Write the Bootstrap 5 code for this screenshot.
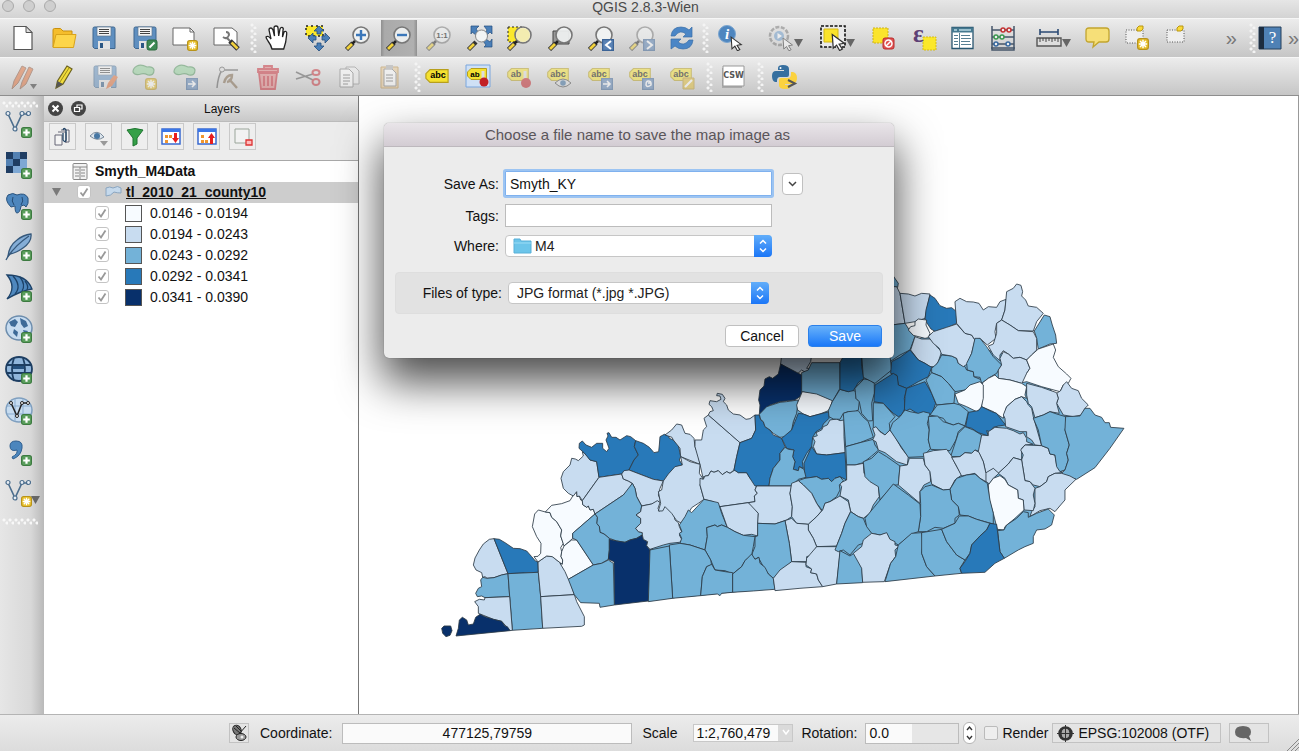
<!DOCTYPE html>
<html lang="en">
<head>
<meta charset="utf-8">
<meta name="viewport" content="width=device-width, initial-scale=1">
<title>QGIS 2.8.3-Wien</title>
<link href="https://cdn.jsdelivr.net/npm/bootstrap@5.3.0/dist/css/bootstrap.min.css" rel="stylesheet">
<style>
body{font-family:"Liberation Sans",Arial,sans-serif;font-size:13px;line-height:18px;color:#111;background:#ececec;overflow:hidden}
.titlebar{height:18px;flex:none;background:linear-gradient(#e6e6e6,#d3d3d3);color:#4a4a4a;font-size:14px;line-height:14px;padding-right:8px}
.lights{left:2px;top:0}
.lights i{width:12px;height:12px;border-radius:50%;background:#cfcfcf;border:1px solid #aaa}
.toolrow{height:39px;flex:none;background:linear-gradient(#ececec,#c6c6c6);border-top:1px solid #f6f6f6;padding-left:7px}
.toolrow.last-row{border-bottom:1px solid #8e8e8e}
.tb{width:32px;height:36px;flex:none;padding:0;border:0;background:none;display:flex;align-items:center;justify-content:center}
.tb svg{width:26px;height:26px;flex:none;overflow:visible}
.tb.pressed{background:linear-gradient(90deg,#8f8f8f,#aaa 10%,#b0b0b0 90%,#8f8f8f);width:36px;margin:0 -2px}
.off svg{opacity:.5}
.off svg.caret{opacity:1}
.grp-a{width:235px}.grp-b{width:437px}.grp-c{width:399px}.grp-d{width:277px}
.grip{width:7px;height:30px;flex:none;background:radial-gradient(circle at 2px 2px,#f4f4f4 1px,transparent 2px) 0 0/7px 6px,radial-gradient(circle at 5px 5px,#f4f4f4 1px,transparent 2px) 0 0/7px 6px}
.grip-h{width:36px;height:7px;flex:none;background:radial-gradient(circle at 2px 2px,#f8f8f8 1px,transparent 2px) 0 0/6px 7px,radial-gradient(circle at 5px 5px,#f8f8f8 1px,transparent 2px) 0 0/6px 7px}
.arrow-btn{width:48px}
.arrow-btn .caret{width:9px;height:8px;margin-top:10px}
.more{color:#777;font-size:20px;line-height:20px;border:0;background:none;padding:0}
.side{width:44px;flex:none;background:linear-gradient(90deg,#e6e6e6,#d8d8d8 70%,#b9b9b9);padding-top:5px}
.side .tb{width:44px;height:41px;padding:2px 7px 0 0;align-items:flex-start}
.side .tb svg{width:28px;height:28px}
.side .tb .caret{width:9px;height:8px;margin:17px -7px 0 -2px}
.panel{width:315px;flex:none;background:#ececec;border-right:1px solid #777}
.panel-head{height:26px;background:linear-gradient(#e9e9e9,#c9c9c9);border-bottom:1px solid #bbb;font-size:12px}
.panel-head .round{width:15px;height:15px;padding:0;border:0;background:none;display:flex}
.panel-tools{gap:9px;padding:1px 5px 10px;border-bottom:1px solid #a8a8a8}
.panel-tools button{width:27px;height:27px;padding:0;border:1px solid #c9c9c9;background:#eee;display:flex;align-items:center;justify-content:center}
.panel-tools svg{width:20px;height:20px}
.tree{background:#fff;font-size:14px}
.tree .trow{height:21px;display:flex;align-items:center;padding-bottom:1px}
.tree .sel{background:#cdcdcd}
.tree .cls{padding-left:51px}
.tree input{appearance:none;width:14px;height:14px;margin:0;border:1px solid #c4c4c4;border-radius:3px;background:#fff url("data:image/svg+xml,%3Csvg xmlns='http://www.w3.org/2000/svg' viewBox='0 0 12 12'%3E%3Cpath d='M2.500 6.500l2.500 3 4.500-7' fill='none' stroke='%23999' stroke-width='1.800'/%3E%3C/svg%3E") center/12px}
.swatch{width:17px;height:17px;border:1px solid #555}
.lv1{background:#f7fbff}.lv2{background:#c8dcf0}.lv3{background:#73b2d8}.lv4{background:#2879b9}.lv5{background:#08306b}
.canvas{background:#fff;border-right:1px solid #999;min-width:0}
.canvas svg{display:block;width:100%;height:100%}
.county path{stroke:#2c3a46;stroke-opacity:.85;stroke-width:3;stroke-linejoin:round}
.f1{fill:#f7fbff}.f2{fill:#c8dcf0}.f3{fill:#73b2d8}.f4{fill:#2879b9}.f5{fill:#08306b}
.savebox{left:384px;top:27px;width:510px;background:#ececec;border-radius:5px;box-shadow:0 0 1px rgba(0,0,0,.5),0 22px 44px 2px rgba(0,0,0,.7);font-size:14px;padding-bottom:11px;z-index:5}
.savebox header{height:24px;line-height:24px;background:linear-gradient(#e9e5e9,#d3ccd3);border-bottom:1px solid #bdb8bd;border-radius:5px 5px 0 0;color:#5a555a;text-align:center;font-size:15px;padding-right:3px}
.savebox label{width:115px;text-align:right;flex:none}
.fields{padding-top:24px}
.frow{display:flex;align-items:center;gap:6px}
.tx{width:267px;height:23px;border:1px solid #bcbcbc;border-radius:0;padding:0 4px;background:#fff;font-size:14px;line-height:20px;color:#111}
.tx.active-in{height:25px;border:1px solid #7fb1ee;box-shadow:0 0 0 2px #9cc4f2;border-radius:1px;outline:0}
.dd{width:267px}
.dd select{appearance:none;width:100%;height:22px;border:1px solid #c6c6c6;border-radius:4px;background:#fff;padding:0 30px 0 8px;font-size:14px;line-height:18px;color:#222}
.dd .steps{right:0;top:0;width:18px;height:22px;border-radius:0 4px 4px 0;background:linear-gradient(#62aefa,#1b76f7);pointer-events:none}
.dd .fold{left:8px;top:3px;width:19px;height:16px;pointer-events:none}
.dd select.with-icon{padding-left:29px}
.dd.narrow{width:261px}
.more-btn{width:21px;height:22px;margin-left:4px;border:1px solid #c0c0c0;border-radius:4px;background:#fff;padding:0;display:flex;align-items:center;justify-content:center}
.typebox{margin:15px 11px 0;background:#e2e2e2;border-radius:4px;height:42px;border:1px solid #dedede}
.typebox label{width:106px}
.mac-row{gap:9px;padding:11px 12px 0 0}
.mac{height:22px;border-radius:4px;border:1px solid #c0c0c0;background:#fff;font-size:14px;line-height:20px;padding:0;width:74px;color:#111}
.mac.go{border-color:#2b80ea;background:linear-gradient(#68b2fa,#1a78f8);color:#fff}
.status{height:37px;flex:none;border-top:1px solid #b4b4b4;background:linear-gradient(#ececec,#dcdcdc);font-size:14px;padding-left:229px}
.status input[type=text]{height:21px;border:1px solid #bcbcbc;background:#fafafa;padding:0 3px;font-size:14px;line-height:18px;color:#111;border-radius:0}
.status .coord{width:290px;text-align:center;margin:0 10px}
.status .rot{width:94px;background:linear-gradient(90deg,#fafafa 50%,#e6e6e6 50%)!important}
.status .lbl-coord{margin-left:11px}
.status .sunk{height:20px;border:1px solid #c2c2c2;background:#e4e4e4;padding:0 4px;display:flex;align-items:center;color:#111;font-size:14px;line-height:16px}
.status .epsg{width:169px}
.status .msgs{width:40px}
.scalebox{width:100px}
.scalebox select{appearance:none;width:100%;height:18px;border:1px solid #c8c8c8;background:linear-gradient(90deg,#fafafa 86%,#dadada 86%);padding:0 2px;font-size:14px;line-height:16px;color:#111}
.scalebox svg{right:3px;top:5px;pointer-events:none}
.spin{width:13px;height:22px;border:1px solid #b5b5b5;border-radius:6px;background:#fff;padding:0;display:flex}
.status input[type=checkbox]{appearance:none;width:14px;height:14px;border:1px solid #bbb;background:#eee;border-radius:2px;margin:0}
</style>
</head>
<body class="d-flex flex-column vh-100">
<svg width="0" height="0" class="position-absolute" aria-hidden="true">
 <defs>
  <symbol id="caret" viewBox="0 0 9 8"><path d="M0 0h9L4.500 8z" fill="#666"/></symbol>
  <symbol id="plus" viewBox="0 0 10 10"><rect x=".5" y=".5" width="9" height="9" rx="2" fill="#5a9e5c" stroke="#3c7a40"/><path d="M5 2v6M2 5h6" stroke="#fff" stroke-width="2"/></symbol>
  <symbol id="star" viewBox="0 0 10 10"><rect x=".5" y=".5" width="9" height="9" rx="2" fill="#e8c02c" stroke="#b8931a"/><path d="M5 1.500v7M1.500 5h7M2.500 2.500l5 5M7.500 2.500l-5 5" stroke="#fff" stroke-width="1.200"/></symbol>
  <symbol id="blue" viewBox="0 0 10 10"><rect x=".5" y=".5" width="9" height="9" fill="#5b83b5" stroke="#3b6396"/></symbol>
  <symbol id="lens" viewBox="0 0 26 26"><path d="M1.500 24.500l6.500-6.500" stroke="#333" stroke-width="4.500"/><path d="M2 24l5-5" stroke="#f2d23c" stroke-width="2.800"/><path d="M7.500 18.500l3-3" stroke="#222" stroke-width="2.500"/><circle cx="16" cy="10" r="8" fill="#f2f4f4" fill-opacity=".9" stroke="#777" stroke-width="1.600"/></symbol>
  <symbol id="floppy" viewBox="0 0 26 26"><path d="M2 3.500q0-1.500 1.500-1.500h19q1.500 0 1.500 1.500v20H3.500L2 22z" fill="#5f8fc0" stroke="#3f678f"/><path d="M6 2h14v9H6z" fill="#f4f4f4" stroke="#5c7690" stroke-width=".7"/><path d="M8 4.500h10M8 6.500h10M8 8.500h10" stroke="#444"/><path d="M7 16h12v8H7z" fill="#e3e3e3"/><path d="M9 18h3v5H9z" fill="#2c5784"/></symbol>
  <symbol id="tag" viewBox="0 0 20 12"><path d="M4 .5h15.500v11H4L.5 8V4z" fill="#f5e130" stroke="#b79f1d"/></symbol>
  <symbol id="cursor" viewBox="0 0 12 14"><path d="M1 1l9.500 7-4 .7 2.600 4-2.200 1.100L4.500 9.500 1.800 12z" fill="#fff" stroke="#333"/></symbol>
  <symbol id="poly" viewBox="0 0 26 12"><path d="M5 2Q9 0 15 3q6-1 7 3 0 6-6 5-4-2-7-1-6 2-8-2Q1 4 5 2z" fill="#8fcf98" stroke="#4b9057" stroke-width="1.200"/></symbol>
  <symbol id="vee" viewBox="0 0 26 24"><path d="M3 4l7 15L17 4h6" fill="none" stroke="#4b6d8d" stroke-width="1.600"/><g fill="#e8eef4" stroke="#4b6d8d" stroke-width="1.200"><circle cx="3" cy="3.500" r="2"/><circle cx="17" cy="3.500" r="2"/><circle cx="23.500" cy="3.500" r="2"/><circle cx="10" cy="19" r="2"/></g></symbol>
 </defs>
</svg>

<header class="titlebar position-relative text-center">QGIS 2.8.3-Wien
 <span class="lights position-absolute d-flex" style="gap:9px"><i></i><i></i><i></i></span>
</header>

<nav class="toolrow d-flex align-items-center" aria-label="Project and navigation">
 <div class="grp-a d-flex justify-content-between">
  <button class="tb" aria-label="New"><svg viewBox="0 0 26 26"><path d="M4 1.500h12l6 6v17H4z" fill="#fff" stroke="#555" stroke-width="1.200"/><path d="M16 1.500v6h6z" fill="#ddd" stroke="#555"/></svg></button>
  <button class="tb" aria-label="Open"><svg viewBox="0 0 26 26"><path d="M2 22V5q0-1.500 1.500-1.500h6L12 6h9v4" fill="#f5bd2c" stroke="#c8900f"/><path d="M2 22.500L5 9.500h20l-2.500 13z" fill="#fdd54a" stroke="#d9a31a"/></svg></button>
  <button class="tb" aria-label="Save"><svg><use href="#floppy"/></svg></button>
  <button class="tb" aria-label="Save as"><svg viewBox="0 0 26 26"><use href="#floppy"/><rect x="15" y="15" width="10" height="10" rx="2" fill="#3f8a55" stroke="#2a6a3d"/><path d="M17.500 22.500l5-5" stroke="#fff" stroke-width="2"/></svg></button>
  <button class="tb" aria-label="New composer"><svg viewBox="0 0 26 26"><path d="M1 3h17l4 4v13H1z" fill="#fff" stroke="#666"/><path d="M18 3v4h4" fill="none" stroke="#666"/><use href="#star" x="15" y="15" width="11" height="11"/></svg></button>
  <button class="tb" aria-label="Composer manager"><svg viewBox="0 0 26 26"><path d="M1 3h18l5 4v13H1z" fill="#fff" stroke="#666"/><path d="M10 12q4 3 6-2 0-3-3-3M14 13l4 4" stroke="#777" stroke-width="2" fill="none"/><path d="M17 16l8 8" stroke="#333" stroke-width="5"/><path d="M18.500 17.500l6 6" stroke="#f0cf3c" stroke-width="2.600"/></svg></button>
 </div>
 <span class="grip ms-2 me-1"></span>
 <div class="grp-b d-flex justify-content-between">
  <button class="tb" aria-label="Pan"><svg viewBox="0 0 26 26"><path d="M8 24Q7 20 4 16q-2-3-2-4 2-2 5 2L5 5q0-2 2-2 1 0 2 2l1.500 6L10 3q0-2 2-2t2 2l.7 8L16 4q1-2 2-1.500 2 .5 1 2.500l-.5 7L20 7q1-1 2-.5t.7 2.500l-1 8-2 7z" fill="#fff" stroke="#222" stroke-width="1.300"/></svg></button>
  <button class="tb" aria-label="Pan to selection"><svg viewBox="0 0 26 26"><path d="M1 1h17v10H1z" fill="#fbe82a" stroke="#222" stroke-width="1.500" stroke-dasharray="2 3"/><g fill="#4a7fb8" stroke="#244e7e" stroke-width=".8"><path d="M14 1l5 5h-3v3h-4V6H9zM14 26l5-5h-3v-3h-4v3H9zM3 13l5-5v3h3v4H8v3zM25 13l-5-5v3h-3v4h3v3z"/></g></svg></button>
  <button class="tb" aria-label="Zoom in"><svg viewBox="0 0 26 26"><use href="#lens"/><path d="M16 5v10M11 10h10" stroke="#3a77ba" stroke-width="2.400"/></svg></button>
  <button class="tb pressed" aria-label="Zoom out"><svg viewBox="0 0 26 26"><use href="#lens"/><path d="M11 10h10" stroke="#3a77ba" stroke-width="2.400"/></svg></button>
  <button class="tb off" aria-label="Zoom to native resolution"><svg viewBox="0 0 26 26"><use href="#lens"/><text x="16" y="13" font-size="8" font-weight="bold" text-anchor="middle">1:1</text></svg></button>
  <button class="tb" aria-label="Zoom full"><svg viewBox="0 0 26 26"><g fill="#4a7fb8" stroke="#244e7e" stroke-width=".7"><path d="M4 1h8L9 4l3 4-3 2-4-3-1 2zM25 1v8l-2-2-4 4-2-2 3-4-3-4zM25 22h-8l2-2-3-4 3-2 4 3 2-3z"/></g><path d="M1.500 24.500L9 17" stroke="#333" stroke-width="4.500"/><path d="M2 24l5-5" stroke="#f2d23c" stroke-width="2.600"/><circle cx="14.500" cy="11" r="6" fill="#f2f4f4" stroke="#888"/></svg></button>
  <button class="tb" aria-label="Zoom to selection"><svg viewBox="0 0 26 26"><path d="M1 2h14v15H1z" fill="#fbe82a" stroke="#222" stroke-dasharray="2 2"/><use href="#lens"/><circle cx="16" cy="10" r="7" fill="#f3ecb0"/></svg></button>
  <button class="tb" aria-label="Zoom to layer"><svg viewBox="0 0 26 26"><path d="M5 6h16v13H5z" fill="#999" stroke="#444"/><use href="#lens"/></svg></button>
  <button class="tb" aria-label="Zoom last"><svg viewBox="0 0 26 26"><use href="#lens"/><use href="#blue" x="14" y="14" width="12" height="12"/><path d="M23 16l-5 4 5 4" fill="none" stroke="#fff" stroke-width="2"/></svg></button>
  <button class="tb off" aria-label="Zoom next"><svg viewBox="0 0 26 26"><use href="#lens"/><use href="#blue" x="14" y="14" width="12" height="12"/><path d="M18 16l5 4-5 4" fill="none" stroke="#fff" stroke-width="2"/></svg></button>
  <button class="tb" aria-label="Refresh"><svg viewBox="0 0 26 26"><path d="M2 11Q3 2 12 2q5 0 8 3l3-3v10h-9l3-3q-6-5-11 2zM24 15q-1 9-10 9-5 0-8-3l-4 3V14h10l-3 3q6 5 11-2z" fill="#4b86c6" stroke="#3a6ea8" stroke-width=".7"/></svg></button>
 </div>
 <span class="grip ms-1"></span>
 <div class="d-flex ms-1">
  <button class="tb" aria-label="Identify"><svg viewBox="0 0 26 26"><circle cx="11" cy="9" r="8.500" fill="#4e86bf" stroke="#7aa5d0"/><text x="11" y="14" font-family="Liberation Serif" font-style="italic" font-weight="bold" font-size="15" fill="#fff" text-anchor="middle">i</text><use href="#cursor" x="14" y="11" width="13" height="15"/></svg></button>
  <button class="tb off arrow-btn ms-3" aria-label="Run feature action"><svg viewBox="0 0 26 26"><circle cx="11" cy="11" r="9" fill="#ddd" stroke="#777" stroke-width="2.500" stroke-dasharray="4 1.500"/><circle cx="11" cy="11" r="5" fill="#6b9bcb"/><path d="M9.500 8l4.500 3-4.500 3z" fill="#fff"/><use href="#cursor" x="14" y="12" width="12" height="14"/></svg><svg class="caret"><use href="#caret"/></svg></button>
  <button class="tb arrow-btn ms-1" aria-label="Select features"><svg viewBox="0 0 26 26"><rect x="1" y="1" width="24" height="21" fill="#e9e9e9" stroke="#111" stroke-width="1.600" stroke-dasharray="3 1.500"/><path d="M4 4h14v13H4z" fill="#fbe32a" stroke="#d5b914"/><use href="#cursor" x="11" y="8" width="15" height="18"/></svg><svg class="caret"><use href="#caret"/></svg></button>
  <button class="tb ms-2" aria-label="Deselect"><svg viewBox="0 0 26 26"><path d="M1 3h15v15H1z" fill="#fbe42c" stroke="#cdb11b" stroke-dasharray="2 1"/><rect x="11" y="13" width="11" height="11" rx="2" fill="#e05252" stroke="#b92929"/><circle cx="16.500" cy="18.500" r="3.500" fill="none" stroke="#fff" stroke-width="1.500"/><path d="M14 21l5-5" stroke="#fff" stroke-width="1.500"/></svg></button>
  <button class="tb ms-2" aria-label="Select by expression"><svg viewBox="0 0 26 26"><path d="M11 12h13v13H11z" fill="#fbe82a" stroke="#d5bb18" stroke-dasharray="2 1"/><text x="1" y="17" font-family="Liberation Serif" font-weight="bold" font-size="25" fill="#5e4175">ε</text></svg></button>
  <button class="tb ms-2" aria-label="Attribute table"><svg viewBox="0 0 26 26"><path d="M0 2.500h21v21H0z" fill="#fff" stroke="#28556f" stroke-width="1.300"/><path d="M0 2.500h21v5H0z" fill="#44788f"/><path d="M2 5h3M7 5h12" stroke="#b8d8e4" stroke-width="1.500"/><path d="M7.500 8v15M2 10.500h4M9 10.500h9M2 13.500h4M9 13.500h10M2 16.500h4M9 16.500h9M2 19.500h4M9 19.500h10" stroke="#577f93"/></svg></button>
  <button class="tb ms-2" aria-label="Field calculator"><svg viewBox="0 0 26 26"><g transform="translate(-2 0)"><path d="M2 1v24h22V1M1 23h24M2 5h22M2 12h22M2 19h22" stroke="#45566a" stroke-width="1.500" fill="none"/><g stroke-width="1.500" fill="#eee"><g stroke="#c43030"><circle cx="13" cy="5" r="2"/><circle cx="19" cy="5" r="2"/></g><g stroke="#3b9950"><circle cx="6" cy="12" r="2"/><circle cx="12" cy="12" r="2"/></g><g stroke="#3869a0"><circle cx="6" cy="19" r="2"/><circle cx="18" cy="19" r="2"/></g></g></g></svg></button>
  <button class="tb arrow-btn ms-2" aria-label="Measure"><svg viewBox="0 0 26 26"><path d="M4 4v6M22 4v6M4 7h18" stroke="#2b4a74" stroke-width="1.600"/><path d="M1 13h24v8H1z" fill="#ddd" stroke="#555" stroke-width="1.400"/><path d="M4 13v4M7 13v3M10 13v4M13 13v3M16 13v4M19 13v3M22 13v4" stroke="#444"/></svg><svg class="caret"><use href="#caret"/></svg></button>
  <button class="tb ms-1" aria-label="Map tips"><svg viewBox="0 0 26 26"><path d="M5 3h17q3 0 3 3v8q0 3-3 3h-7l-6 5 1-5H5q-3 0-3-3V6q0-3 3-3z" fill="#f6df78" stroke="#c2a52e" stroke-width="1.300"/></svg></button>
  <button class="tb ms-2" aria-label="New bookmark"><svg viewBox="0 0 26 26"><path d="M2 5h17v13H2z" fill="#eee" stroke="#555" stroke-dasharray="1 1.500"/><path d="M13 6V3l2-2h4v3l-2 2z" fill="#f9d93a" stroke="#b89510"/><use href="#star" x="13" y="13" width="12" height="12"/></svg></button>
  <button class="tb ms-2" aria-label="Bookmarks"><svg viewBox="0 0 26 26"><path d="M3 5h17v12H3z" fill="#eee" stroke="#555" stroke-dasharray="1 1.500"/><path d="M13 6V3l2-2h4v3l-2 2z" fill="#f9d93a" stroke="#b89510"/></svg></button>
 </div>
 <button class="more ms-auto me-2" aria-label="More tools">»</button>
 <span class="grip ms-1"></span>
 <button class="tb" aria-label="Help"><svg viewBox="0 0 26 26"><path d="M0 2h22v22H0z" fill="#4f81b5" stroke="#27405c"/><path d="M0 2h5v22H0z" fill="#1d2d40"/><text x="13.500" y="18" font-family="Liberation Serif" font-size="17" fill="#fff" text-anchor="middle">?</text></svg></button>
 <button class="more" aria-label="More help">»</button>
</nav>

<nav class="toolrow last-row d-flex align-items-center" aria-label="Digitizing and labels">
 <div class="grp-c d-flex justify-content-between">
  <button class="tb off" aria-label="Current edits"><svg viewBox="0 0 26 26"><path d="M2 25l2-8L12 2l4 2-8 15zM10 25l2-7 7-15 4 2-7 15z" fill="#e0703a" stroke="#8a5740"/><path d="M20 20h7l-3.500 5z" fill="#333"/></svg></button>
  <button class="tb" aria-label="Toggle editing"><svg viewBox="0 0 26 26"><path d="M5 24l1.500-7L16 2l5 3-9 15z" fill="#f1dc3b" stroke="#6c6320" stroke-width="1.200"/><path d="M5 24l1.500-7 5.500 3z" fill="#555"/><path d="M9 18l9-14" stroke="#9c8d1c"/></svg></button>
  <button class="tb off" aria-label="Save edits"><svg viewBox="0 0 26 26"><use href="#floppy"/><path d="M14 25l2-6 6-8 4 2-6 9z" fill="#e0703a"/></svg></button>
  <button class="tb off" aria-label="Add feature"><svg viewBox="0 0 26 26"><use href="#poly" y="0" width="26" height="12"/><use href="#star" x="13" y="14" width="12" height="12"/></svg></button>
  <button class="tb off" aria-label="Move feature"><svg viewBox="0 0 26 26"><use href="#poly" y="0" width="26" height="12"/><use href="#blue" x="13" y="14" width="12" height="12"/><path d="M15 20h7M19 17l3 3-3 3" stroke="#fff" stroke-width="1.600" fill="none"/></svg></button>
  <button class="tb off" aria-label="Node tool"><svg viewBox="0 0 26 26"><path d="M3 24Q4 12 8 6h16" fill="none" stroke="#555" stroke-width="1.500"/><circle cx="8" cy="5.500" r="2.500" fill="#ddd" stroke="#555"/><path d="M10 19q2-8 8-8 0 6-5 7M15 15l8 9" stroke="#7d664b" stroke-width="2.400" fill="none"/></svg></button>
  <button class="tb off" aria-label="Delete"><svg viewBox="0 0 26 26"><g fill="#e08080" stroke="#c72a35" stroke-width="1.800"><path d="M4 9h18l-2 16H6z"/><path d="M3 5h20v3H3zM9 5V2h8v3"/></g><path d="M9 12v10M13 12v10M17 12v10" stroke="#c72a35" stroke-width="2"/></svg></button>
  <button class="tb off" aria-label="Cut"><svg viewBox="0 0 26 26"><path d="M1 8l17 8M1 15l17-5" stroke="#555" stroke-width="1.600"/><g fill="none" stroke="#c43038" stroke-width="2"><ellipse cx="21" cy="8.500" rx="3.500" ry="2.500"/><ellipse cx="21" cy="18" rx="3.500" ry="3"/></g></svg></button>
  <button class="tb off" aria-label="Copy"><svg viewBox="0 0 26 26"><path d="M10 3h9l4 4v13H10z" fill="#eee" stroke="#888"/><path d="M4 5h9l4 4v14H4z" fill="#fff" stroke="#777"/><path d="M7 11h7M7 14h7M7 17h7M7 20h5" stroke="#666"/></svg></button>
  <button class="tb off" aria-label="Paste"><svg viewBox="0 0 26 26"><path d="M4 3h17v21H4z" fill="#e8c894" stroke="#b88a3e"/><path d="M7 5h8l4 4v13H7z" fill="#fff" stroke="#777"/><path d="M9 11h7M9 14h7M9 17h7" stroke="#666"/><path d="M9 1h7v4H9z" fill="#aaa"/></svg></button>
 </div>
 <span class="grip ms-2"></span>
 <div class="grp-d d-flex justify-content-between">
  <button class="tb" aria-label="Labeling"><svg viewBox="0 0 26 26"><use href="#tag" x="1" y="5" width="24" height="14"/><text x="14" y="14" font-size="9" font-weight="bold" text-anchor="middle">abc</text></svg></button>
  <button class="tb" aria-label="Pinned labels"><svg viewBox="0 0 26 26"><path d="M1 1h24v22H1z" fill="#cfe0f5" stroke="#7aa6dd"/><use href="#tag" x="2" y="4" width="20" height="12"/><text x="10" y="13" font-size="8" font-weight="bold" text-anchor="middle">ab</text><path d="M18 7v8" stroke="#ddd" stroke-width="3"/><circle cx="19" cy="18" r="4.500" fill="#c22026"/></svg></button>
  <button class="tb off" aria-label="Pin labels"><svg viewBox="0 0 26 26"><use href="#tag" x="1" y="4" width="22" height="13"/><text x="10" y="13" font-size="9" font-weight="bold" text-anchor="middle">ab</text><path d="M19 7v8" stroke="#ddd" stroke-width="3"/><circle cx="20" cy="19" r="5" fill="#c22026"/></svg></button>
  <button class="tb off" aria-label="Show labels"><svg viewBox="0 0 26 26"><use href="#tag" x="1" y="4" width="22" height="13"/><text x="12" y="13" font-size="9" font-weight="bold" text-anchor="middle">abc</text><path d="M9 19q8-8 16 0-8 8-16 0z" fill="#ddd" stroke="#444"/><circle cx="17" cy="19" r="2.800" fill="#386b9c"/></svg></button>
  <button class="tb off" aria-label="Move label"><svg viewBox="0 0 26 26"><use href="#tag" x="1" y="4" width="22" height="13"/><text x="12" y="13" font-size="9" font-weight="bold" text-anchor="middle">abc</text><use href="#blue" x="14" y="14" width="12" height="12"/><path d="M16 20h7M20 17l3 3-3 3" stroke="#fff" stroke-width="1.600" fill="none"/></svg></button>
  <button class="tb off" aria-label="Rotate label"><svg viewBox="0 0 26 26"><use href="#tag" x="1" y="4" width="22" height="13"/><text x="12" y="13" font-size="9" font-weight="bold" text-anchor="middle">abc</text><use href="#blue" x="14" y="14" width="12" height="12"/><path d="M23 18q-5-3-5 3 1 3 5 0v-2h-3" stroke="#fff" stroke-width="1.500" fill="none"/></svg></button>
  <button class="tb off" aria-label="Change label"><svg viewBox="0 0 26 26"><use href="#tag" x="1" y="4" width="22" height="13"/><text x="12" y="13" font-size="9" font-weight="bold" text-anchor="middle">abc</text><path d="M14 14h11v11H14z" fill="#e0bd35" stroke="#b8952a"/><path d="M16 23l7-7" stroke="#fff" stroke-width="2.200"/></svg></button>
 </div>
 <span class="grip ms-2 me-1"></span>
 <button class="tb" aria-label="CSW client"><svg viewBox="0 0 26 26"><path d="M2 4h20v20H2z" fill="#aaa"/><path d="M3 2h21v20H3z" fill="#fff" stroke="#999"/><text x="13.500" y="14" font-family="DejaVu Sans" font-size="8" font-weight="bold" fill="#555" text-anchor="middle">CSW</text></svg></button>
 <span class="grip ms-2 me-1"></span>
 <button class="tb" aria-label="Python console"><svg viewBox="0 0 26 26"><path d="M12 1q6 0 6 4v6q0 2-2 2H9q-3 0-3 4v1H4q-3-1-3-6t4-5h8V6H7V4q0-3 5-3z" fill="#366f9f"/><circle cx="9.500" cy="4" r="1" fill="#fff"/><path d="M14 25q-6 0-6-4v-5q0-2 2-2h7q3 0 3-4V8h2q4 1 4 6t-4 6h-8v1h6v1q0 3-6 3z" fill="#fbd23f"/><path d="M17 16l7 3.500-7 3.500" fill="none" stroke="#555" stroke-width="2"/></svg></button>
</nav>

<main class="d-flex flex-fill position-relative" style="min-height:0">
 <nav class="side d-flex flex-column align-items-center" aria-label="Add layers">
  <span class="grip-h me-1"></span>
  <button class="tb" aria-label="Add vector layer"><svg viewBox="0 0 28 28"><use href="#vee" width="26" height="24"/><use href="#plus" x="16" y="17" width="11" height="11"/></svg></button>
  <button class="tb" aria-label="Add raster layer"><svg viewBox="0 0 28 28"><path d="M1 1h21v21H1z" fill="#7ea8d4"/><path d="M1 1h7v7H1zM15 1h7v7h-7zM8 8h7v7H8zM1 15h7v7H1z" fill="#1f3d63"/><path d="M8 1h7v7H8zM1 8h7v7H1z" fill="#5381b3"/><use href="#plus" x="16" y="17" width="11" height="11"/></svg></button>
  <button class="tb" aria-label="Add PostGIS layer"><svg viewBox="0 0 28 28"><path d="M3 3q5-3 9 0 8-3 11 3 1 6-2 9l-2-2-3 1q-1 7-4 7-2 0-2-7l-4 1Q-1 8 3 3z" fill="#4d86bd" stroke="#2b547e"/><path d="M8 5q-2 4 1 8M17 5q2 4-1 8" fill="none" stroke="#244b73"/><use href="#plus" x="16" y="17" width="11" height="11"/></svg></button>
  <button class="tb" aria-label="Add SpatiaLite layer"><svg viewBox="0 0 28 28"><path d="M3 23Q4 13 12 7 18 2 26 1q1 8-8 14-7 5-13 6z" fill="#84add6" stroke="#35587b" stroke-width="1.300"/><path d="M1 27Q8 14 24 3" fill="none" stroke="#35587b" stroke-width="1.300"/><use href="#plus" x="16" y="17" width="11" height="11"/></svg></button>
  <button class="tb" aria-label="Add MSSQL layer"><svg viewBox="0 0 28 28"><path d="M2 1q20 0 25 14-12 2-25 10Q12 13 2 1z" fill="#4f88be" stroke="#1d4268" stroke-width="1.300"/><path d="M8 2q9 10 2 18M15 3q6 8 2 14M20 7q4 5 2 9" fill="none" stroke="#1d4268" stroke-width="1.300"/><use href="#plus" x="16" y="17" width="11" height="11"/></svg></button>
  <button class="tb" aria-label="Add WMS layer"><svg viewBox="0 0 28 28"><ellipse cx="14" cy="13" rx="13" ry="12" fill="#c7dcf0" stroke="#6d8dad" stroke-width="1.500"/><path d="M4 7l6-3 3 3-3 5-4-1zM15 3l6 3 2 5-4 2-3-4zM9 14l4 3-1 5-4-4zM18 15l5 1-3 5z" fill="#3d6a98"/><use href="#plus" x="16" y="17" width="11" height="11"/></svg></button>
  <button class="tb" aria-label="Add WCS layer"><svg viewBox="0 0 28 28"><ellipse cx="14" cy="13" rx="13" ry="12" fill="#90b6dc" stroke="#1d3e62" stroke-width="1.800"/><path d="M2 9h24M1 17h25M9 2q-4 11 0 23M18 2q4 11 0 23" stroke="#1d3e62" stroke-width="1.800" fill="none"/><path d="M8 10h11v3H8z" fill="#25517f"/><use href="#plus" x="16" y="17" width="11" height="11"/></svg></button>
  <button class="tb" aria-label="Add WFS layer"><svg viewBox="0 0 28 28"><ellipse cx="14" cy="13" rx="13" ry="12" fill="#c7dcf0" stroke="#7f9fbf" stroke-width="1.500"/><path d="M2 9h24M2 17h24M10 2v22M18 2v22" stroke="#8badcf" fill="none"/><path d="M6 6l6 13 5-13h6" fill="none" stroke="#222" stroke-width="1.500"/><g fill="#fff" stroke="#222"><circle cx="6" cy="6" r="1.500"/><circle cx="12" cy="19" r="1.500"/><circle cx="17" cy="6" r="1.500"/><circle cx="23" cy="6" r="1.500"/></g><use href="#plus" x="16" y="17" width="11" height="11"/></svg></button>
  <button class="tb" aria-label="Add delimited text layer"><svg viewBox="0 0 28 28"><path d="M7 19q6-3 5-7-7 2-7-4 0-5 6-5 7 0 6 7-1 8-9 11z" fill="#4c86bd" stroke="#2f5f90"/><use href="#plus" x="16" y="17" width="11" height="11"/></svg></button>
  <button class="tb" aria-label="New layer"><svg viewBox="0 0 28 28"><use href="#vee" width="26" height="24"/><use href="#star" x="16" y="17" width="11" height="11"/></svg><svg class="caret"><use href="#caret"/></svg></button>
  <span class="grip-h me-1"></span>
 </nav>

 <section class="panel d-flex flex-column" aria-label="Layers">
  <div class="panel-head d-flex align-items-center ps-1">
   <button class="round" aria-label="Close"><svg viewBox="0 0 15 15"><circle cx="7.500" cy="7.500" r="7.500" fill="#444"/><path d="M4.500 4.500l6 6M10.500 4.500l-6 6" stroke="#fff" stroke-width="2"/></svg></button>
   <button class="round ms-2" aria-label="Float"><svg viewBox="0 0 15 15"><circle cx="7.500" cy="7.500" r="7.500" fill="#444"/><path d="M3.500 6.500h5v4h-5zM6 6V4h5v4H9" fill="none" stroke="#fff" stroke-width="1.200"/></svg></button>
   <span class="flex-fill text-center">Layers</span>
  </div>
  <div class="panel-tools d-flex">
   <button aria-label="Add group"><svg viewBox="0 0 20 20"><path d="M2 8h7v10H2zM5 5h8v11M8 3h8v12h-4" fill="#f4f4f4" stroke="#667"/><path d="M10 6v7q2 3 3 0V3q-2-3-3 0" fill="none" stroke="#246" stroke-width="1.300"/></svg></button>
   <button aria-label="Visibility"><svg viewBox="0 0 20 20"><path d="M1 9q7-8 14 1-7 5-14-1z" fill="#dde6ee" stroke="#789"/><circle cx="8" cy="9" r="3" fill="#4878a4"/><path d="M11 14h8l-4 5z" fill="#999"/></svg></button>
   <button aria-label="Filter legend"><svg viewBox="0 0 20 20"><path d="M2 3q8-3 16 0l-6 8v6l-4 2v-8z" fill="#35a048" stroke="#1f7430"/></svg></button>
   <button aria-label="Expand all"><svg viewBox="0 0 20 20"><path d="M1 2h18v15H1z" fill="#fff" stroke="#3a6ad0" stroke-width="1.500"/><path d="M1 2h18v3H1z" fill="#3a76e8"/><path d="M4 8h3v3H4zM4 13h3v3H4zM8 8h3v3H8z" fill="#f0962e"/><path d="M13 6h3v5h2l-3.500 5L11 11h2z" fill="#e81e1e"/></svg></button>
   <button aria-label="Collapse all"><svg viewBox="0 0 20 20"><path d="M1 2h18v15H1z" fill="#fff" stroke="#3a6ad0" stroke-width="1.500"/><path d="M1 2h18v3H1z" fill="#3a76e8"/><path d="M4 8h3v3H4zM4 13h3v3H4zM8 13h3v3H8z" fill="#f0962e"/><path d="M13 17v-6h-2l3.500-5L18 11h-2v6z" fill="#e81e1e"/></svg></button>
   <button aria-label="Remove layer"><svg viewBox="0 0 20 20"><path d="M2 2h14v14H2z" fill="#f2f2f2" stroke="#9aa59a"/><path d="M13 13h6v5h-6z" fill="#fbb" stroke="#d33" stroke-width="1.300"/></svg></button>
  </div>
  <div class="tree flex-fill">
   <div class="trow fw-bold"><svg class="ms-4" width="23" height="17" viewBox="0 0 23 17"><rect x="5" y=".5" width="14" height="16" rx="1" fill="#f3f3f3" stroke="#888"/><path d="M5 4h14M7 7h4M13 7h4M7 10h4M13 10h4M7 13h4M13 13h4M12 4v12" stroke="#888"/></svg><span class="ps-1">Smyth_M4Data</span></div>
   <div class="trow sel fw-bold"><svg class="ms-2 me-3" width="9" height="8" opacity=".8"><use href="#caret"/></svg><input type="checkbox" id="lay" checked disabled><svg class="ms-2 me-1" width="23" height="14" viewBox="0 0 23 14"><path d="M7 3q4-2 7 0 5-3 8 0v5q-4 0-7-1-3 4-8 4z" fill="#c5d9ec" stroke="#8aa5c0"/></svg><label for="lay" class="text-decoration-underline">tl_2010_21_county10</label></div>
   <div class="trow cls"><input type="checkbox" id="c1" checked disabled><span class="swatch lv1 mx-3 me-2"></span><label for="c1">0.0146 - 0.0194</label></div>
   <div class="trow cls"><input type="checkbox" id="c2" checked disabled><span class="swatch lv2 mx-3 me-2"></span><label for="c2">0.0194 - 0.0243</label></div>
   <div class="trow cls"><input type="checkbox" id="c3" checked disabled><span class="swatch lv3 mx-3 me-2"></span><label for="c3">0.0243 - 0.0292</label></div>
   <div class="trow cls"><input type="checkbox" id="c4" checked disabled><span class="swatch lv4 mx-3 me-2"></span><label for="c4">0.0292 - 0.0341</label></div>
   <div class="trow cls"><input type="checkbox" id="c5" checked disabled><span class="swatch lv5 mx-3 me-2"></span><label for="c5">0.0341 - 0.0390</label></div>
  </div>
 </section>

 <section class="canvas flex-fill" aria-label="Map">
  <svg viewBox="359 96 939 618" role="img" aria-label="Kentucky counties">
   <g class="county" transform="translate(640 350) scale(.3333)">
    <path class="f3" d="M30 600L200 480 400 420 480 150 620 30 750 20 850-40 1180 30 1250 150 1350 230 1250 390 1100 600 950 665 600 695 30 750z"/>
    <!-- western counties -->
    <g transform="translate(-630 90)">
     <path class="f2" d="M192 476L178 478 160 492 148 510 135 534 130 555 138 570 155 578 158 592 165 590 171 595 192 593 215 585 234 581z"/>
     <path class="f4" d="M192 476L208 478 225 488 250 505 270 506 290 513 305 530 316 543 324 546 325 577 234 581z"/>
     <path class="f3" d="M158 592L152 600 155 620 145 625 137 640 142 650 155 648 165 653 239 650 234 581 215 585 192 593 171 595z"/>
     <path class="f3" d="M234 581L325 577 332 650 338 745 247 751 239 650z"/>
     <path class="f2" d="M165 653L163 660 148 658 134 665 145 680 145 700 160 706 190 718 215 724 240 752 247 751 239 650z"/>
     <path class="f5" d="M78 768L85 745 88 720 97 712 110 720 115 735 130 732 137 712 150 703 165 710 190 718 215 724 225 738 232 740 240 752z"/>
     <path class="f5" d="M35 745L42 738 62 738 66 752 60 766 48 770 38 760z"/>
     <path class="f2" d="M324 546L350 528 367 530 390 548 408 575 418 598 433 644 332 650 325 577z"/>
     <path class="f2" d="M332 650L433 644 440 665 463 710 463 735 455 739 338 745z"/>
     <path class="f1" d="M346 396L325 390 314 402 307 440 320 470 333 490 332 520 324 529 312 530 324 546 350 528 367 530 390 548 397 553 398 540 393 530 395 515 392 503 400 490 392 468 395 450 380 425 365 412 360 398z"/>
     <path class="f1" d="M346 396L365 376 395 371 420 362 430 345 440 335 441 350 448 348 452 360 457 362 458 374 470 382 475 378 480 390 490 388 495 402 428 460 428 475 415 487 402 498 392 468 395 450 380 425 365 412 360 398z"/>
     <path class="f1" d="M402 498L425 480 440 480 460 510 490 555 415 598 405 575 390 550 397 553 398 540 393 530 395 515z"/>
     <path class="f2" d="M457 215L460 228 445 242 436 237 425 235 420 255 400 275 393 295 400 325 415 340 430 348 440 335 441 350 448 348 457 362 507 292 500 245 480 240 470 225z"/>
     <path class="f4" d="M457 183L468 195 485 202 500 190 518 190 518 205 530 215 537 205 528 180 534 168 531 160 537 158 545 172 558 172 570 180 590 167 602 170 617 182 613 200 625 225 612 240 597 270 575 282 507 292 500 245 480 240 462 218 447 205 448 190z"/>
     <path class="f4" d="M617 182L640 190 658 202 672 218 686 215 688 195 690 170 703 163 715 165 718 175 730 180 745 195 752 230 748 240 757 255 735 262 720 285 700 303 670 298 597 270 612 240 625 225 613 200z"/>
     <path class="f2" d="M507 292L575 282 580 297 595 303 607 310 600 325 580 345 495 402 490 388 480 390 475 378 470 382 458 374 457 362z"/>
     <path class="f2" d="M575 282L582 272 597 270 670 298 700 303 690 325 685 345 692 362 665 372 635 378 620 350 615 325 607 310 595 303 580 297z"/>
     <path class="f3" d="M607 310L615 325 620 350 635 378 632 395 618 405 632 415 632 430 617 445 625 455 637 458 637 465 620 475 600 480 585 487 560 483 538 475 522 462 510 457 508 440 500 430 502 412 495 402 580 345z"/>
     <path class="f3" d="M495 402L502 412 500 430 508 440 510 457 522 462 538 475 538 510 535 538 515 550 490 555 440 480 428 475 428 460z"/>
     <path class="f5" d="M538 478L560 483 585 487 600 480 620 475 637 465 640 478 653 485 650 497 660 510 658 600 655 663 553 675 552 545 535 538 538 510z"/>
     <path class="f3" d="M415 598L490 555 515 550 535 540 550 550 553 675 510 682 508 670 452 668 433 644z"/>
     <path class="f2" d="M635 378L665 372 682 362 690 368 684 385 688 394 695 380 710 376 718 390 730 398 735 420 745 428 748 440 755 455 748 465 756 480 748 487 720 490 700 495 660 508 650 497 653 485 640 478 637 465 637 458 625 455 617 445 632 430 632 415 618 405 632 395z"/>
    </g>
    <!-- central counties -->
    <path class="f2" d="M75 255L95 240 110 222 125 225 135 250 150 253 162 265 165 290 175 315 180 343 122 320 120 295 100 270 96 262z"/>
    <path class="f2" d="M205 195L300 278 290 320 282 360 270 370 260 365 247 374 235 362 222 367 213 363 205 377 190 380 190 388 180 343 165 290 165 270 185 270 190 240 200 230 192 205z"/>
    <path class="f2" d="M205 195L210 185 220 182 215 170 207 163 210 152 230 155 243 148 240 138 230 137 232 130 247 133 255 145 250 155 260 165 265 180 280 192 300 195 318 208 330 206 345 195 347 240 335 265 300 278z"/>
    <path class="f2" d="M122 320L150 335 180 343 178 370 188 385 180 405 192 448 175 460 155 473 148 485 125 520 110 512 95 490 75 470 68 483 55 483 62 460 55 425 65 420 70 393 85 372 105 350 127 345z"/>
    <path class="f2" d="M180 385L190 388 195 378 205 377 213 363 222 367 235 362 247 374 260 365 270 370 285 360 295 368 320 368 330 385 340 390 350 408 345 420 352 430 343 438 345 455 325 458 240 470 220 455 192 448 180 405z"/>
    <path class="f3" d="M192 448L235 458 245 490 262 532 245 525 232 530 225 525 200 533 202 560 195 600 150 585 120 580 125 565 118 550 126 545 118 525 135 500 145 480 155 488z"/>
    <path class="f2" d="M240 470L325 458 345 475 355 490 353 558 335 553 310 556 285 545 262 532z"/>
    <path class="f4" d="M345 195L358 195 362 210 370 215 375 230 390 240 400 255 425 265 435 290 420 310 420 330 400 355 390 385 387 408 345 408 330 385 320 368 295 368 282 360 290 320 300 278 335 265 347 240z"/>
    <path class="f2" d="M422 42L425 15 515 15 512 35 500 55 512 55 498 68 485 60 472 72z"/>
    <path class="f5" d="M422 42L485 75 487 122 480 140 465 150 420 155 390 165 358 193 360 165 356 150 360 120 372 108 375 87 388 80 398 85 415 72z"/>
    <path class="f3" d="M358 193L380 170 420 157 440 155 475 150 470 190 460 215 455 240 437 260 420 262 400 250 390 240 375 230 370 215 362 208z"/>
    <path class="f3" d="M485 68L505 60 515 38 600 38 600 115 577 155 530 135 485 125z"/>
    <path class="f1" d="M487 125L530 132 577 152 572 170 565 182 540 192 510 200 490 192 473 180 470 165z"/>
    <path class="f4" d="M475 190L490 192 510 200 540 192 568 185 567 205 550 222 545 235 528 245 518 262 515 290 500 310 487 335 490 355 478 350 475 362 460 358 465 335 458 320 462 300 440 295 425 265 455 240z"/>
    <path class="f2" d="M570 210L590 207 600 212 612 210 612 260 615 308 560 315 530 312 520 290 525 275 518 262 532 257 528 248 545 240 550 230 562 225z"/>
    <path class="f4" d="M530 312L560 315 615 308 620 390 600 380 585 385 575 395 565 385 545 388 530 380 495 385 492 340 515 290z"/>
    <path class="f3" d="M435 292L445 298 462 300 458 320 465 335 460 358 475 362 478 350 492 358 498 382 475 388 455 408 387 408 390 385 400 355 420 330 420 310z"/>
    <path class="f3" d="M600 118L625 125 635 120 650 125 648 145 658 155 655 180 640 188 625 185 610 190 600 208 580 207 567 200 565 182 577 155z"/>
    <path class="f4" d="M600 38L612 15 665 15 665 50 672 85 655 98 640 122 625 125 600 118z"/>
    <path class="f3" d="M672 87L690 90 703 100 703 130 695 160 698 212 685 213 665 190 658 155 648 145 645 115z"/>
    <path class="f3" d="M610 190L625 185 655 182 668 200 685 215 700 262 660 278 617 290z"/>
    <path class="f3" d="M617 290L660 278 700 268 705 285 716 300 695 318 670 338 645 345 620 345z"/>
    <path class="f2" d="M620 345L645 345 670 340 672 370 715 405 718 440 700 465 690 490 670 505 655 500 632 485 625 450 600 438 605 410 598 400 620 390z"/>
    <path class="f2" d="M350 408L455 408 450 430 457 470 455 500 440 510 405 522 353 520 355 490 325 458 345 455 343 438 352 430 345 420z"/>
    <path class="f3" d="M475 392L495 385 530 380 545 388 565 385 575 395 585 385 600 380 610 392 598 405 600 420 590 440 570 455 555 460 548 483 530 460 515 430 490 405z"/>
    <path class="f2" d="M455 400L475 392 490 405 515 430 530 460 545 483 530 500 505 523 470 520 455 500 457 470 450 430z"/>
    <path class="f2" d="M600 438L625 455 632 485 615 520 605 550 590 588 530 590 520 565 505 540 505 523 530 500 548 480 555 460 570 455z"/>
    <path class="f2" d="M435 512L455 505 470 520 505 523 505 540 520 565 530 590 518 615 500 620 500 635 455 635 448 580z"/>
    <path class="f3" d="M353 520L405 522 435 512 448 580 455 635 400 685 385 672 370 650 355 622 345 628 335 615 345 590 345 560 353 558z"/>
    <path class="f3" d="M200 533L225 525 232 530 245 525 262 532 285 545 310 556 345 560 340 590 335 615 315 632 305 650 278 672 255 662 225 660 212 630 195 600 202 560z"/>
    <path class="f3" d="M88 585L120 580 150 585 195 600 212 630 215 645 200 650 187 680 182 737 98 745z"/>
    <path class="f3" d="M30 600L88 588 98 745 25 755z"/>
    <path class="f3" d="M215 643L225 660 255 665 278 668 278 727 245 730 240 737 232 732 182 737 187 680 200 650z"/>
    <path class="f3" d="M278 672L305 650 315 632 335 612 345 628 357 622 360 640 375 652 385 672 400 685 405 718 340 723 278 727z"/>
    <path class="f2" d="M400 685L420 660 455 635 498 637 498 650 515 657 512 668 530 672 535 690 548 710 480 715 405 722z"/>
    <path class="f2" d="M530 590L600 590 600 610 590 702 548 710 535 690 530 672 512 668 515 657 498 645 500 625z"/>
    <path class="f3" d="M632 485L655 500 670 505 678 525 697 550 670 580 655 585 630 615 610 600 595 605 585 600 605 550 615 520z"/>
    <path class="f3" d="M600 602L630 618 645 608 655 625 665 640 668 698 590 702z"/>
    <!-- north-eastern counties -->
    <g transform="translate(630 -240)">
     <path class="f3" d="M100 5L130 18 145 40 143 52 100 50z"/>
     <path class="f2" d="M100 50L140 50 150 70 165 160 100 168z"/>
     <path class="f2" d="M150 70L175 72 195 78 215 70 240 72 225 145 195 155 165 160z"/>
     <path class="f3" d="M100 168L165 160 180 183 195 200 180 240 150 255 120 275 100 265z"/>
     <path class="f3" d="M34 240L118 240 125 300 75 340 40 322z"/>
     <path class="f4" d="M240 75L255 85 270 107 290 115 305 113 320 125 320 160 295 172 265 190 243 177 225 150 228 120z"/>
     <path class="f2" d="M195 200L215 207 240 207 255 220 262 232 275 245 265 275 255 290 240 290 225 280 205 270 182 240z"/>
     <path class="f1" d="M175 180L182 170 195 167 195 155 205 147 230 150 228 165 240 190 235 203 225 205 190 196z"/>
     <path class="f4" d="M180 240L205 270 225 280 245 292 235 320 205 335 170 355 145 345 140 315 122 310 125 275 150 262z"/>
     <path class="f4" d="M75 345L130 310 142 318 145 345 170 355 163 385 165 415 155 435 145 440 130 430 100 400 72 395z"/>
     <path class="f4" d="M170 355L225 335 245 370 257 400 245 435 225 428 205 432 180 417 163 425 165 380z"/>
     <path class="f3" d="M245 295L262 280 275 255 305 258 320 265 325 280 345 290 350 300 370 305 372 320 395 330 395 340 370 345 345 360 315 365 295 340 275 320 245 308z"/>
     <path class="f3" d="M228 330L245 308 275 320 295 340 315 365 312 400 260 405z"/>
     <path class="f2" d="M235 200L250 185 290 172 320 162 345 190 365 195 375 210 365 250 352 282 340 290 325 280 320 265 305 258 275 253 268 235 250 220z"/>
     <path class="f2" d="M315 95L330 85 350 95 370 96 387 100 400 120 415 110 440 112 450 95 468 88 465 120 455 150 440 160 435 185 438 205 412 225 390 205 375 210 365 195 345 190 320 160z"/>
     <path class="f3" d="M350 280L365 250 375 205 390 205 410 230 430 260 455 285 440 310 415 325 395 340 390 322 372 320 370 305 352 300z"/>
     <path class="f2" d="M470 65L490 55 500 42 513 46 518 65 515 78 527 90 535 108 560 112 580 130 560 155 550 183 505 182 480 165 455 150 465 120z"/>
     <path class="f3" d="M583 135L600 140 607 165 617 195 620 220 600 222 565 237 560 205 553 183z"/>
     <path class="f2" d="M440 190L440 160 455 150 480 165 505 182 550 185 560 205 560 240 545 255 530 270 510 262 490 265 475 252 460 242 450 255 450 272 430 255 415 228 430 222z"/>
     <path class="f2" d="M450 265L460 245 475 252 490 265 510 262 530 270 540 295 530 310 530 325 515 340 480 330 445 325 445 300 455 285z"/>
     <path class="f1" d="M530 270L545 255 565 237 610 222 617 240 610 262 625 290 650 312 663 325 655 340 640 345 630 365 575 350 530 335 517 338 530 310 540 295z"/>
     <path class="f2" d="M640 345L650 335 665 355 685 362 695 385 715 405 705 415 695 435 670 440 640 435 620 400 625 385 620 370 632 362z"/>
     <path class="f2" d="M530 340L575 352 620 368 625 385 620 400 628 430 600 425 580 435 555 443 545 410 535 400 530 375z"/>
     <path class="f1" d="M398 338L415 325 435 315 445 325 480 330 515 340 530 350 525 375 530 385 515 380 495 388 470 410 460 445 430 425 395 410z"/>
     <path class="f1" d="M315 372L345 360 360 345 390 335 400 345 400 385 393 415 380 425 350 410 325 400z"/>
     <path class="f4" d="M355 427L385 422 395 410 425 425 440 430 455 450 467 465 445 468 430 472 420 485 410 482 415 498 385 488 365 475 347 470z"/>
     <path class="f2" d="M465 445L460 435 470 410 495 388 515 380 530 395 535 405 545 415 550 440 560 475 575 527 555 525 545 510 530 500 530 485 510 485 467 470z"/>
     <path class="f3" d="M240 435L262 405 312 400 330 405 355 425 345 468 325 460 310 465 290 458 280 445 262 440z"/>
     <path class="f3" d="M70 398L100 400 135 440 118 460 120 480 105 495 85 480 70 480z"/>
    </g>
    <!-- south-eastern counties -->
    <g transform="translate(630 180)">
     <path class="f2" d="M68 55L78 50 90 65 105 75 120 60 135 80 155 115 175 140 172 165 140 155 105 128 85 120 78 95 68 90 75 75z"/>
     <path class="f3" d="M120 60L128 38 150 20 165 0 180 5 205 10 220 5 240 10 232 40 238 60 235 90 242 115 220 140 175 142z"/>
     <path class="f3" d="M235 20L262 18 280 35 310 45 325 40 345 48 325 65 318 90 300 122 242 118 235 90 238 60z"/>
     <path class="f3" d="M325 70L345 50 370 60 395 75 390 125 375 120 365 130 345 128 330 140 302 140z"/>
     <path class="f2" d="M395 75L415 77 415 65 435 52 470 55 490 62 510 72 520 68 530 85 530 95 550 103 525 105 515 115 515 150 490 143 475 162 445 190 430 177 408 192 400 155 385 125z"/>
     <path class="f2" d="M515 150L520 135 512 120 525 105 575 107 595 115 600 132 615 135 620 165 635 188 615 190 595 200 590 215 570 230 550 225 540 215 525 212z"/>
     <path class="f3" d="M550 25L580 15 600 5 620 12 647 20 650 40 645 60 658 105 650 130 655 150 645 180 630 185 620 170 615 135 600 132 595 115 575 107 565 60z"/>
     <path class="f3" d="M647 20L690 18 705-5 720-5 735 15 755 22 765 38 778 38 782 52 822 55 780 115 735 173 680 208 650 200 635 190 645 180 655 150 650 130 658 105 645 60z"/>
     <path class="f2" d="M555 235L570 230 590 215 595 200 615 190 635 190 660 198 678 208 645 240 645 270 632 285 615 305 600 295 570 302 540 320 545 305 555 290z"/>
     <path class="f2" d="M445 190L475 162 490 143 515 150 525 212 540 215 555 235 550 255 555 280 550 302 522 300 520 270 505 265 503 240 475 225 465 205z"/>
     <path class="f2" d="M405 190L430 175 447 190 430 205 418 222 405 212z"/>
     <path class="f1" d="M415 225L430 205 450 197 465 208 475 225 503 240 505 265 520 270 522 300 495 325 465 350 462 360 442 358 430 310 418 270z"/>
     <path class="f3" d="M443 362L462 360 470 345 500 325 520 305 535 308 535 322 560 310 595 297 613 315 605 345 585 357 560 360 550 380 550 400 525 410 505 420 463 445 450 425z"/>
     <path class="f3" d="M40 155L65 145 85 125 110 140 150 168 145 225 130 225 90 270 85 230 60 215 45 200z"/>
     <path class="f2" d="M150 168L172 165 178 145 220 145 225 165 240 185 242 215 222 225 210 245 210 280 145 225z"/>
     <path class="f2" d="M220 130L250 122 290 118 305 138 315 160 335 195 315 210 300 238 280 240 245 222 240 185 225 165z"/>
     <path class="f2" d="M305 142L330 140 345 128 365 130 375 120 387 127 400 155 408 190 408 215 390 205 375 190 335 198 318 165z"/>
     <path class="f3" d="M300 238L320 205 350 195 375 192 390 205 412 220 420 270 430 310 430 342 380 328 355 318 330 315 325 290 305 270z"/>
     <path class="f3" d="M212 280L210 245 225 230 245 225 280 240 300 238 305 270 325 290 328 315 315 325 315 340 280 355 255 352 230 365 205 365 212 320z"/>
     <path class="f3" d="M45 325L130 222 175 255 210 282 212 320 205 365 185 372 145 405 120 390 110 370 90 375 65 370 50 350z"/>
     <path class="f2" d="M65 370L90 375 110 368 120 388 135 395 135 405 147 408 135 420 137 440 122 460 103 515 38 517 35 475 10 430 35 410 40 390z"/>
     <path class="f3" d="M145 405L185 370 215 368 220 400 215 430 230 470 255 498 105 515 122 460 137 440z"/>
     <path class="f3" d="M215 368L275 358 290 395 320 435 345 450 330 475 335 490 255 498 230 470 215 430z"/>
     <path class="f3" d="M275 358L315 340 328 318 355 318 380 328 420 340 410 360 390 378 365 405 360 430 345 450 320 435 290 395z"/>
     <path class="f4" d="M420 340L440 343 445 385 450 425 463 445 435 460 405 487 335 490 330 475 345 455 360 430 365 405 390 378 410 360z"/>
    </g>
   </g>
  </svg>
 </section>

 <form class="savebox position-absolute" aria-label="Save map image" onsubmit="return false">
  <header>Choose a file name to save the map image as</header>
  <div class="fields">
   <div class="frow mb-2"><label for="fname">Save As:</label><input class="tx active-in" id="fname" type="text" value="Smyth_KY"><button type="button" class="more-btn" aria-label="Show more"><svg width="9" height="6" viewBox="0 0 9 6"><path d="M1 1l3.500 3.500L8 1" fill="none" stroke="#444" stroke-width="1.500"/></svg></button></div>
   <div class="frow mb-2"><label for="tags">Tags:</label><input class="tx" id="tags" type="text"></div>
   <div class="frow"><label for="where">Where:</label><div class="dd position-relative"><select id="where" class="with-icon"><option>M4</option></select>
    <svg class="fold position-absolute" viewBox="0 0 19 16"><path d="M1 1h6l1 2h10v12H1z" fill="#6cc5ea" stroke="#58b0d8"/><path d="M1 5h17" stroke="#9bdcf5"/></svg>
    <svg class="steps position-absolute" viewBox="0 0 18 22"><path d="M6 8.500l3-3 3 3M6 13.500l3 3 3-3" fill="none" stroke="#fff" stroke-width="1.500"/></svg></div></div>
  </div>
  <div class="typebox frow"><label for="ftype">Files of type:</label><div class="dd narrow position-relative"><select id="ftype"><option>JPG format (*.jpg *.JPG)</option></select>
   <svg class="steps position-absolute" viewBox="0 0 18 22"><path d="M6 8.500l3-3 3 3M6 13.500l3 3 3-3" fill="none" stroke="#fff" stroke-width="1.500"/></svg></div></div>
  <div class="mac-row d-flex justify-content-end"><button type="button" class="mac">Cancel</button><button type="submit" class="mac go">Save</button></div>
 </form>
</main>

<footer class="status d-flex align-items-center">
 <button class="sunk p-0" aria-label="Toggle extents"><svg width="18" height="18" viewBox="0 0 18 18"><ellipse cx="7" cy="6" rx="4" ry="5" fill="#777" stroke="#222" transform="rotate(-30 7 6)"/><path d="M4 4l6 5M6 2l5 5M9 10l7-8" stroke="#222"/><ellipse cx="11" cy="13" rx="5" ry="3.500" fill="#999" stroke="#222"/><circle cx="12" cy="13" r="1.500" fill="#eee"/></svg></button>
 <label for="coord" class="lbl-coord">Coordinate:</label><input type="text" id="coord" class="coord" value="477125,79759">
 <label for="scale" class="me-3">Scale</label><div class="scalebox position-relative"><select id="scale"><option>1:2,760,479</option></select><svg class="position-absolute" width="8" height="7"><path d="M1 1l3 4 3-4" stroke="#fff" fill="none" stroke-width="1.500"/></svg></div>
 <label for="rot" class="ms-2 me-2">Rotation:</label><input type="text" id="rot" class="rot me-1" value="0.0">
 <button class="spin me-2" aria-label="Step rotation"><svg width="11" height="20" viewBox="0 0 11 20"><path d="M3 7l2.500-3L8 7M3 13l2.500 3L8 13" fill="none" stroke="#333" stroke-width="1.400"/></svg></button>
 <input type="checkbox" id="render"><label for="render" class="ms-1 me-1">Render</label>
 <button class="sunk epsg"><svg class="me-1" width="17" height="17" viewBox="0 0 17 17"><circle cx="8.500" cy="8.500" r="6" fill="#aaa" stroke="#333" stroke-width="2.500"/><path d="M8.500 0v17M0 8.500h17M5 4q-2 4 0 9M12 4q2 4 0 9" fill="none" stroke="#333"/></svg>EPSG:102008 (OTF)</button>
 <button class="sunk msgs ms-2" aria-label="Messages"><svg width="20" height="18" viewBox="0 0 20 18"><path d="M9 2q8 0 8 6 0 3-2 4l2 5-5-3Q1 15 1 8q0-6 8-6z" fill="#666"/></svg></button>
 <svg class="ms-auto align-self-end" width="13" height="13" viewBox="0 0 13 13"><path d="M1 13L13 1M5 13l8-8M9 13l4-4" stroke="#888"/></svg>
</footer>
<script src="https://cdn.jsdelivr.net/npm/bootstrap@5.3.0/dist/js/bootstrap.bundle.min.js"></script>
</body>
</html>
